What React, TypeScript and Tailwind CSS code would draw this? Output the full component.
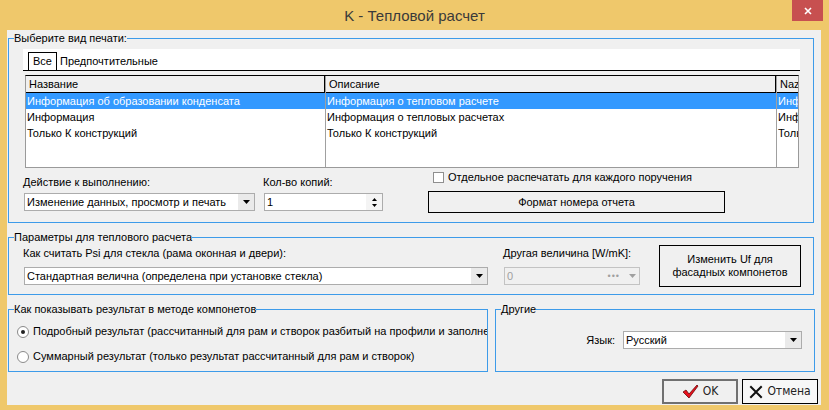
import React from 'react';

const COLS = [
  { title: 'Название', w: 'w-[300px]', rows: ['Информация об образовании конденсата', 'Информация', 'Только К конструкций'] },
  { title: 'Описание', w: 'w-[451px]', rows: ['Информация о тепловом расчете', 'Информация о тепловых расчетах', 'Только К конструкций'] },
  { title: 'Naz', w: 'flex-1', rows: ['Информация', 'Информация', 'Только К'] },
];

function Arrow({ grey }: { grey?: boolean }) {
  return (
    <svg width="7" height="4" viewBox="0 0 7 4" className={grey ? 'fill-[#a0a0a0]' : 'fill-black'}>
      <path d="M0 0h7L3.5 4z" />
    </svg>
  );
}

function Combo({ text, className }: { text: string; className: string }) {
  return (
    <div className={`h-[18px] bg-white border border-[#acacac] flex items-center ${className}`}>
      <span className="flex-1 pl-[2px] truncate">{text}</span>
      <div className="w-[16px] h-full bg-[#eaeaea] flex items-center justify-center">
        <Arrow />
      </div>
    </div>
  );
}

function Legend({ children }: { children: React.ReactNode }) {
  return <div className="-mt-[7px] ml-[5px] w-fit bg-[#f0f0f0] leading-[13px] whitespace-nowrap">{children}</div>;
}

function Radio({ checked, label }: { checked?: boolean; label: string }) {
  return (
    <div className="flex items-center gap-[4px] whitespace-nowrap">
      <div className="w-[12px] h-[12px] shrink-0 rounded-full border border-[#8a8a8a] bg-white flex items-center justify-center">
        {checked && <div className="w-[4px] h-[4px] rounded-full bg-[#222]" />}
      </div>
      <span>{label}</span>
    </div>
  );
}

export default function App() {
  return (
    <div className="w-[829px] h-[410px] bg-[#efc86b] flex flex-col font-['Liberation_Sans',Arial,sans-serif] text-[11px] leading-[13px] text-black overflow-hidden">
      {/* Title bar */}
      <div className="relative h-[30px] flex items-center justify-center">
        <span className="text-[15px] leading-none text-[#3a3a3a] mt-[1px]">K - Тепловой расчет</span>
        <button className="absolute top-0 right-[6px] w-[31px] h-[21px] bg-[#c75050] flex items-center justify-center">
          <svg width="8" height="8" viewBox="0 0 8 8" className="stroke-white" strokeWidth="1.6">
            <path d="M1 1l6 6M7 1L1 7" />
          </svg>
        </button>
      </div>

      <div className="ml-[7px] mr-[8px] h-[375px] bg-[#f0f0f0] flex flex-col">
        {/* Print type group */}
        <div className="mt-[8px] ml-[1px] mr-[7px] h-[185px] border border-[#3d9be9] flex flex-col">
          <Legend>Выберите вид печати:</Legend>

          <div className="mt-[4px] ml-[14px] w-[777px] h-[22px] bg-white border-b border-black flex items-end pl-[5px]">
            <div className="h-[18px] border border-b-0 border-black px-[4px] flex items-center">Все</div>
            <div className="h-[18px] px-[3px] flex items-center">Предпочтительные</div>
          </div>

          <div className="mt-[4px] ml-[16px] w-[774px] h-[93px] bg-white border border-[#9a9a9a] border-t-black flex overflow-hidden">
            {COLS.map((c, i) => (
              <div key={c.title} className={`${c.w} flex flex-col overflow-hidden ${i < 2 ? 'border-r border-[#a0a0a0]' : ''}`}>
                <div className={`h-[17px] shrink-0 bg-[#f0f0f0] border-b border-black flex items-center pl-[3px] ${i < 2 ? 'border-r border-[#505050]' : ''} ${i === 0 ? '' : 'pl-[2px]'}`}>
                  {c.title}
                </div>
                {c.rows.map((r, j) => (
                  <div
                    key={j}
                    className={`h-[16px] flex items-center pl-[1px] whitespace-nowrap ${j === 0 ? 'bg-[#3399ff] text-white' : ''}`}
                  >
                    {r}
                  </div>
                ))}
              </div>
            ))}
          </div>

          <div className="flex items-start">
            <div className="ml-[14px] mt-[8px] flex flex-col">
              <span>Действие к выполнению:</span>
              <Combo text="Изменение данных, просмотр и печать" className="mt-[4px] ml-[1px] w-[231px]" />
            </div>
            <div className="ml-[8px] mt-[8px] flex flex-col">
              <span>Кол-во копий:</span>
              <div className="mt-[4px] ml-[1px] w-[119px] h-[18px] bg-white border border-[#acacac] flex items-center">
                <span className="flex-1 pl-[2px]">1</span>
                <div className="w-[16px] h-full bg-[#f4f4f4] flex flex-col items-center justify-center gap-[3px]">
                  <svg width="5" height="3" viewBox="0 0 5 3"><path d="M0 3h5L2.5 0z" /></svg>
                  <svg width="5" height="3" viewBox="0 0 5 3"><path d="M0 0h5L2.5 3z" /></svg>
                </div>
              </div>
            </div>
            <div className="ml-[45px] mt-[3px] flex flex-col">
              <div className="ml-[5px] flex items-center gap-[4px] h-[13px]">
                <div className="w-[11px] h-[11px] bg-white border border-[#8f8f8f]" />
                <span>Отдельное распечатать для каждого поручения</span>
              </div>
              <button className="mt-[7px] w-[297px] h-[22px] border border-black bg-[#f0f0f0] flex items-center justify-center">
                Формат номера отчета
              </button>
            </div>
          </div>
        </div>

        {/* Thermal parameters group */}
        <div className="mt-[14px] ml-[1px] mr-[7px] h-[58px] border border-[#3d9be9] flex flex-col">
          <Legend>Параметры для теплового расчета</Legend>
          <div className="flex items-start">
            <div className="ml-[14px] mt-[3px] flex flex-col">
              <span>Как считать Psi для стекла (рама оконная и двери):</span>
              <Combo text="Стандартная велична (определена при установке стекла)" className="mt-[7px] ml-[1px] w-[464px]" />
            </div>
            <div className="ml-[15px] mt-[3px] flex flex-col">
              <span>Другая величина [W/mK]:</span>
              <div className="mt-[7px] ml-[1px] w-[136px] h-[18px] bg-[#f0f0f0] border border-[#c3c3c3] flex items-center text-[#a0a0a0]">
                <span className="flex-1 pl-[2px]">0</span>
                <span className="tracking-[1px] text-[9px] mr-[5px]">•••</span>
                <div className="w-[14px] flex justify-center"><Arrow grey /></div>
              </div>
            </div>
            <button className="ml-[19px] mt-[1px] w-[142px] h-[42px] border border-black bg-[#f0f0f0] flex flex-col items-center justify-center">
              <span>Изменить Uf для</span>
              <span>фасадных компонетов</span>
            </button>
          </div>
        </div>

        <div className="mt-[14px] flex">
          {/* Result display group */}
          <div className="ml-[1px] w-[480px] h-[63px] border border-[#3d9be9] flex flex-col">
            <Legend>Как показывать результат в методе компонетов</Legend>
            <div className="pl-[8px] mt-[9px] flex flex-col gap-[12px] overflow-hidden">
              <Radio checked label="Подробный результат (рассчитанный для рам и створок разбитый на профили и заполнения)" />
              <Radio label="Суммарный результат (только результат рассчитанный для рам и створок)" />
            </div>
          </div>

          {/* Other group */}
          <div className="ml-[7px] w-[320px] h-[63px] border border-[#3d9be9] flex flex-col">
            <Legend>Другие</Legend>
            <div className="mt-[15px] mr-[12px] flex items-center justify-end gap-[8px]">
              <span>Язык:</span>
              <Combo text="Русский" className="w-[179px]" />
            </div>
          </div>
        </div>

        {/* Dialog buttons */}
        <div className="mt-[7px] mr-[3px] flex justify-end gap-[4px] font-['DejaVu_Sans_Condensed','DejaVu_Sans',sans-serif] text-[12px] text-[#222]">
          <button className="w-[76px] h-[25px] border-2 border-[#707070] bg-[#f0f0f0] flex items-center justify-center gap-[4px]">
            <svg width="17" height="15" viewBox="0 0 17 15">
              <path d="M1 8l3-2 3 4 8-9 1 1-9 12z" fill="#e8101c" stroke="#6a0a0a" strokeWidth="0.8" strokeLinejoin="round" />
            </svg>
            <span>OK</span>
          </button>
          <button className="w-[76px] h-[25px] border border-black bg-[#f7f7f7] flex items-center justify-center gap-[4px]">
            <svg width="14" height="14" viewBox="0 0 14 14" stroke="#111" strokeWidth="2" strokeLinecap="square">
              <path d="M2 2l10 10M12 2L2 12" />
            </svg>
            <span>Отмена</span>
          </button>
        </div>
      </div>
    </div>
  );
}
